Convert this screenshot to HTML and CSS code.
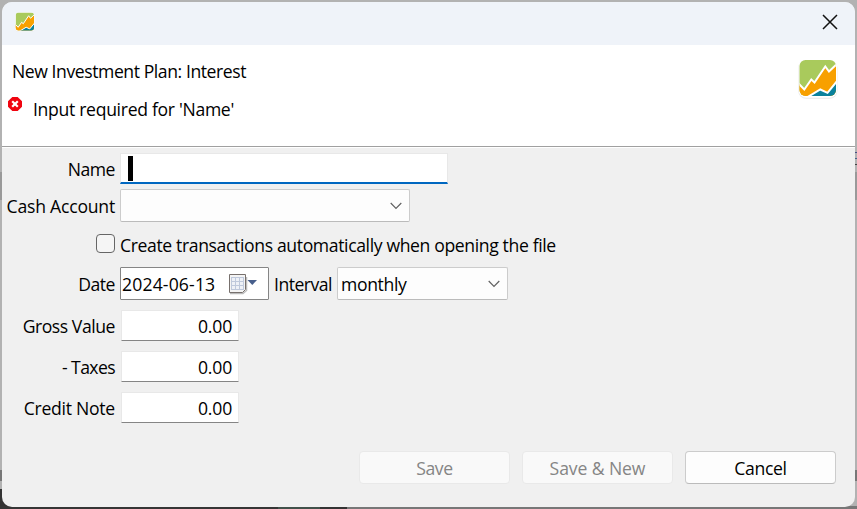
FILE: index.html
```html
<!DOCTYPE html>
<html lang="en">
<head>
<meta charset="utf-8">
<title>New Investment Plan</title>
<link rel="stylesheet" href="styles.css">
</head>
<body>
<svg class="defs" width="0" height="0" aria-hidden="true">
  <symbol id="logo" viewBox="0 0 40 40">
    <rect x=".2" y="1" width="39.2" height="38.800" rx="8" fill="#e9e9e9"/>
    <rect x=".6" y=".3" width="38.600" height="38.500" rx="7.500" fill="#fff"/>
    <clipPath id="tile"><rect x="1.500" y="1" width="36.500" height="36" rx="6"/></clipPath>
    <g clip-path="url(#tile)">
      <rect x="1" y="1" width="38" height="36" fill="#a9ca5c"/>
      <path d="M-1 23 L6.300 30.500 L13.300 20.500 L16.500 23.500 L27.300 7.500 L31 12.500 L40 4 V40 H-1Z" fill="#f8a000" stroke="#fff" stroke-width="2"/>
      <path d="M8 39 L22.300 30.500 L29.500 33.800 L40 21 V40Z" fill="#0a819c" stroke="#fff" stroke-width="2"/>
    </g>
  </symbol>
</svg>
<main class="window">
  <header class="titlebar">
    <svg class="app-icon"><use href="#logo"/></svg>
    <svg class="close" viewBox="0 0 16 16"><path d="M1 1 15 15M15 1 1 15"/></svg>
  </header>
  <section class="banner">
    <div class="messages">
      <h1 class="t-title">New Investment Plan: Interest</h1>
      <div class="error">
        <svg class="error-icon" viewBox="0 0 14 14"><path d="M4.300 0H9.700L14 4.300V9.700L9.700 14H4.300L0 9.700V4.300Z" fill="#f00410"/><path d="M4.200 4.200 9.800 9.800M9.800 4.200 4.200 9.800" stroke="#fff" stroke-width="2.200"/></svg>
        <p class="t-error">Input required for 'Name'</p>
      </div>
    </div>
    <svg class="logo"><use href="#logo"/></svg>
  </section>
  <form class="form">
    <div class="row name-row"><label class="t-name">Name</label><div class="field name"><i class="caret"></i></div></div>
    <div class="row account-row"><label class="t-cash">Cash Account</label><div class="combo account"><svg class="chevron" viewBox="0 0 12 8"><path d="M.7 1 6 6.300 11.300 1"/></svg></div></div>
    <div class="row check-row"><span class="check-cell"><i class="checkbox"></i></span><span class="t-check">Create transactions automatically when opening the file</span></div>
    <div class="row date-row"><label class="t-name">Date</label>
      <div class="date"><span class="t-date">2024-06-13</span>
        <svg class="calendar" viewBox="0 0 30 22">
          <path d="M2 20.500H15L18.500 17.500V4" fill="none" stroke="#bbb" stroke-width="1.500"/>
          <path d="M1.500 1.500H17.500V16.500L14.500 19.500H1.500Z" fill="#f4f4f4" stroke="#77706d"/>
          <rect x="3" y="4" width="13" height="13" fill="#bfc9dc"/>
          <path d="M4 5h3v3H4zM8 5h3v3H8zM12 5h3v3h-3zM4 9h3v3H4zM8 9h3v3H8zM12 9h3v3h-3zM4 13h3v3H4zM8 13h3v3H8zM12 13h3v3h-3z" fill="#eef1f7"/>
          <path d="M19.500 7H29L24.300 12Z" fill="#485f8c"/>
        </svg>
      </div>
      <span class="t-interval">Interval</span>
      <div class="combo interval"><span class="t-monthly">monthly</span><svg class="chevron" viewBox="0 0 12 8"><path d="M.7 1 6 6.300 11.300 1"/></svg></div>
    </div>
    <div class="row money"><label class="t-gross">Gross Value</label><div class="field amount">0.00</div></div>
    <div class="row money"><label class="t-taxes">- Taxes</label><div class="field amount">0.00</div></div>
    <div class="row money"><label class="t-credit">Credit Note</label><div class="field amount">0.00</div></div>
  </form>
  <footer class="actions">
    <button type="button" disabled>Save</button>
    <button type="button" class="t-new" disabled>Save &amp; New</button>
    <button type="button">Cancel</button>
  </footer>
</main>
</body>
</html>
```
FILE: styles.css
```css
* { box-sizing: border-box; }
body {
  margin: 0; padding: 2px; width: 857px; height: 509px; overflow: hidden;
  font: 17.600px/24px "Open Sans", "Noto Sans", sans-serif; letter-spacing: -.35px; color: #000;
  background:
    linear-gradient(90deg, #353535 0 278px, #41514a 278px 320px, #333 320px 347px, #777 347px) 0 100% / 100% 3px no-repeat,
    linear-gradient(#333 0 0) 0 100% / 12px 20px no-repeat,
    linear-gradient(#484e85 0 0) 100% 152px / 3px 1px no-repeat,
    linear-gradient(#44638c 0 0) 100% 158px / 3px 1px no-repeat,
    linear-gradient(#444 0 0) 100% 164px / 3px 1px no-repeat,
    linear-gradient(#777 0 0) 0 470px / 100% 11px no-repeat,
    linear-gradient(#999 0 0) 0 172px / 100% 28px no-repeat,
    #b2b2b2;
}
.defs { position: absolute; }
h1, p { margin: 0; font: inherit; }
.window { width: 853px; height: 505px; border-radius: 10px; overflow: hidden; background: #f0f0f0; display: flex; flex-direction: column; }
.titlebar { height: 43px; background: #eff3f9; display: flex; justify-content: space-between; padding: 10px 17px 0 13px; }
.app-icon { width: 20px; height: 20px; }
.close { width: 16px; height: 16px; margin-top: 2px; fill: none; stroke: #111; stroke-width: 1.500; }
.banner { height: 102px; background: #fff; border-bottom: 1px solid #a0a0a0; display: flex; justify-content: space-between; padding: 14px 17px 0 6px; }
.messages h1 { padding-left: 4px; }
.error { display: flex; align-items: flex-start; gap: 11px; margin-top: 14px; }
.error-icon { width: 14px; height: 14px; }
.logo { width: 40px; height: 40px; }
.form { border-top: 1px solid #fff; padding-top: 5px; display: flex; flex-direction: column; }
.row { display: flex; align-items: center; gap: 5px; }
label, .check-cell { width: 113px; flex: none; text-align: right; white-space: nowrap; }
.name-row { height: 31px; }
.account-row { height: 33px; margin-top: 5px; }
.check-row { height: 45px; }
.check-cell { display: flex; justify-content: flex-end; }
.checkbox { width: 19px; height: 19px; border: 1px solid #666; border-radius: 4px; background: #f5f5f5; margin-bottom: 2px; }
.date-row { height: 33px; }
.money { height: 31px; margin-top: 10px; }
.field { background: #fff; border: 1px solid #e8e8e8; }
.name { width: 328px; height: 31px; border-bottom: 2px solid #0067c0; padding: 2px 7px; }
.caret { display: block; width: 5px; height: 25px; background: #000; }
.combo { height: 33px; border: 1px solid #ccc; border-bottom-color: #bbb; border-radius: 2px; background: #fdfdfd; display: flex; align-items: center; justify-content: space-between; padding: 0 7px 0 3px; }
.account { width: 290px; justify-content: flex-end; }
.interval { width: 171px; }
.chevron { width: 12px; height: 8px; fill: none; stroke: #616161; stroke-width: 1.200; }
.date { width: 149px; height: 33px; border: 1px solid #858585; border-radius: 1px; background: #fff; display: flex; align-items: center; justify-content: space-between; padding: 0 10px 0 1px; }
.calendar { width: 30px; height: 22px; flex: none; }
.t-interval { width: 58px; white-space: nowrap; letter-spacing: -.5px; }
.amount { width: 118px; height: 31px; margin-left: 1px; border-bottom-color: #858585; border-radius: 1px; text-align: right; line-height: 30px; padding-right: 6px; letter-spacing: -.2px; }
.t-title { letter-spacing: -.43px; }
.t-error { letter-spacing: -.31px; }
.t-check { white-space: nowrap; letter-spacing: -.37px; }
.t-name { letter-spacing: -.5px; }
.t-cash { letter-spacing: -.22px; }
.t-date { letter-spacing: .15px; }
.t-gross { letter-spacing: -.45px; }
.t-taxes { letter-spacing: -.6px; }
.t-credit { letter-spacing: -.26px; }
.actions { display: flex; justify-content: flex-end; gap: 12px; padding-right: 19px; margin-top: 28px; }
button { width: 151px; height: 33px; border: 1px solid #ccc; border-bottom-color: #bbb; border-radius: 4px; background: #fdfdfd; color: #000; font: inherit; letter-spacing: -.35px; padding: 0; }
.t-new { letter-spacing: -.1px; }
button:disabled { border-color: #e9e9e9; background: #f9f9f9; color: #858585; }
```
